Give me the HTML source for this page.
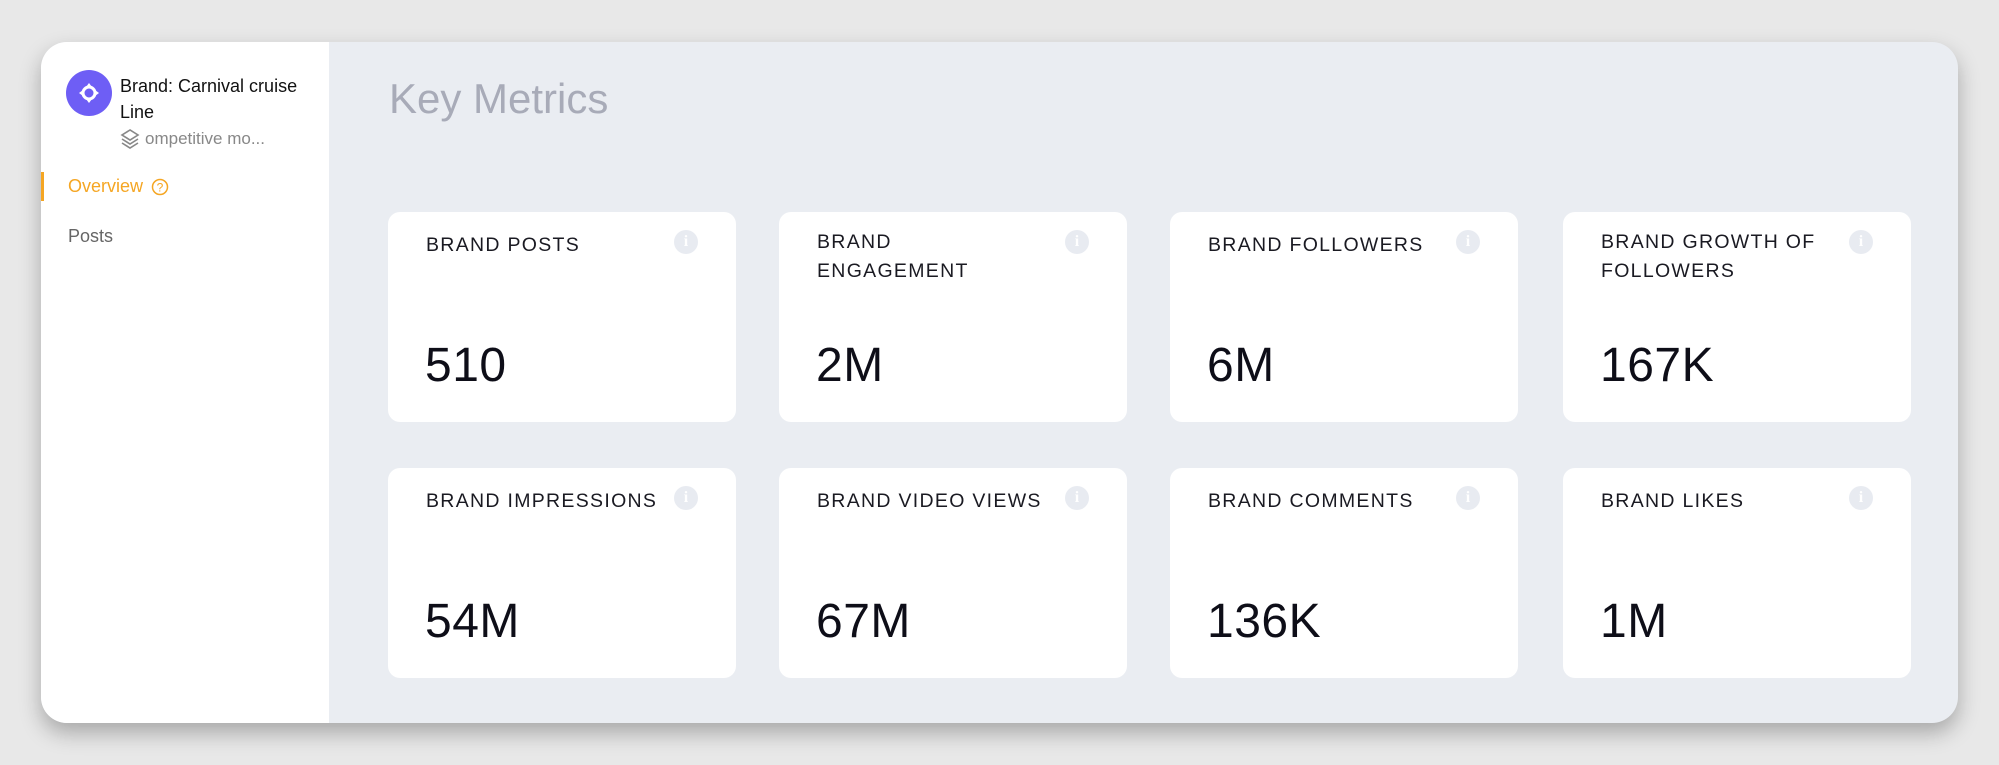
<!DOCTYPE html>
<html><head><meta charset="utf-8"><style>
*{margin:0;padding:0;box-sizing:border-box}
body{width:1999px;height:765px;background:#e8e8e8;font-family:"Liberation Sans",sans-serif;position:relative;overflow:hidden}
.win{position:absolute;left:41px;top:42px;width:1917px;height:681px;border-radius:26px;background:#eaedf2;overflow:hidden;box-shadow:0 10px 22px rgba(0,0,0,.28)}
.side{position:absolute;left:0;top:0;width:288px;height:100%;background:#fff}
.av{position:absolute;left:25px;top:28px;width:46px;height:46px;border-radius:50%;background:#6e5ef5}
.brand{position:absolute;left:79px;top:31px;font-size:18px;line-height:26px;color:#111;width:200px}
.sub{position:absolute;left:79px;top:86px;font-size:17px;color:#888;display:flex;align-items:center;gap:5px}
.bar{position:absolute;left:0;top:130px;width:3px;height:29px;background:#f5a623}
.ov{position:absolute;left:27px;top:134px;font-size:18px;color:#f5a623;display:flex;align-items:center;gap:8px}
.posts{position:absolute;left:27px;top:184px;font-size:18px;color:#666}
h1{position:absolute;left:348px;top:33px;font-size:42px;font-weight:normal;color:#a8abb8}
.card{position:absolute;width:348px;height:210px;background:#fff;border-radius:12px}
.t{position:absolute;left:38px;top:16px;width:250px;font-size:19.5px;line-height:29px;color:#1a1a22;letter-spacing:1.3px}
.v{position:absolute;left:37px;top:126px;font-size:48px;color:#0e0e18;letter-spacing:.5px}
.i{position:absolute;left:286px;top:18px;width:24px;height:24px;border-radius:50%;background:#e8ebf1;color:#fff;font-size:16px;font-weight:bold;text-align:center;line-height:24px;font-family:"Liberation Serif",serif}
</style></head><body>
<div class="win">
<div class="side">
<div class="av"><svg width="46" height="46" viewBox="0 0 46 46"><g fill="#fff"><circle cx="23" cy="23" r="6" fill="none" stroke="#fff" stroke-width="3"/><path d="M23 13l3 4h-6zM23 33l3-4h-6zM13 23l4-3v6zM33 23l-4-3v6z"/></g></svg></div>
<div class="brand">Brand: Carnival cruise Line</div>
<div class="sub"><svg width="20" height="22" viewBox="0 0 20 22" fill="none" stroke="#888" stroke-width="1.6"><path d="M10 2L2 7l8 5 8-5z"/><path d="M2 11l8 5 8-5"/><path d="M2 15l8 5 8-5"/></svg>ompetitive mo...</div>
<div class="bar"></div>
<div class="ov">Overview <svg width="18" height="18" viewBox="0 0 18 18"><circle cx="9" cy="9" r="7.5" fill="none" stroke="#f5a623" stroke-width="1.5"/><text x="9" y="13.5" font-size="12" fill="#f5a623" text-anchor="middle" font-family="Liberation Sans">?</text></svg></div>
<div class="posts">Posts</div>
</div>
<h1>Key Metrics</h1>
<div class="card" style="left:347px;top:170px"><div class="t" style="top:19px">BRAND POSTS</div><div class="i">i</div><div class="v">510</div></div>
<div class="card" style="left:738px;top:170px"><div class="t">BRAND<br>ENGAGEMENT</div><div class="i">i</div><div class="v">2M</div></div>
<div class="card" style="left:1129px;top:170px"><div class="t" style="top:19px">BRAND FOLLOWERS</div><div class="i">i</div><div class="v">6M</div></div>
<div class="card" style="left:1522px;top:170px"><div class="t">BRAND GROWTH OF FOLLOWERS</div><div class="i">i</div><div class="v">167K</div></div>
<div class="card" style="left:347px;top:426px"><div class="t" style="top:19px">BRAND IMPRESSIONS</div><div class="i">i</div><div class="v">54M</div></div>
<div class="card" style="left:738px;top:426px"><div class="t" style="top:19px">BRAND VIDEO VIEWS</div><div class="i">i</div><div class="v">67M</div></div>
<div class="card" style="left:1129px;top:426px"><div class="t" style="top:19px">BRAND COMMENTS</div><div class="i">i</div><div class="v">136K</div></div>
<div class="card" style="left:1522px;top:426px"><div class="t" style="top:19px">BRAND LIKES</div><div class="i">i</div><div class="v">1M</div></div>
</div>
</body></html>
